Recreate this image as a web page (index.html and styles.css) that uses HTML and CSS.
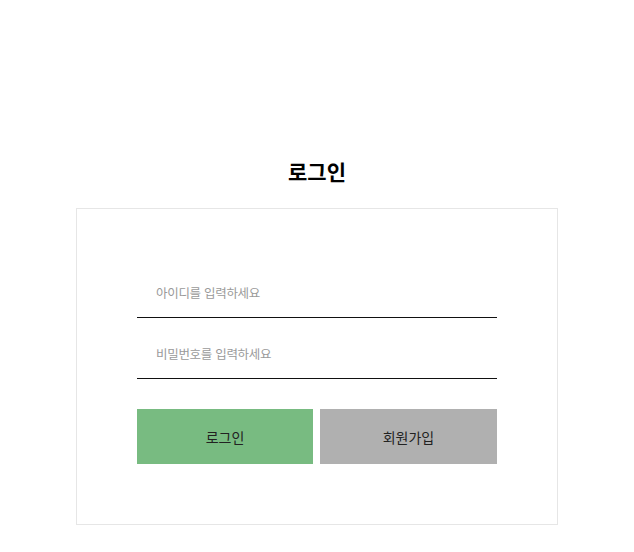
FILE: index.html
```html
<!DOCTYPE html>
<html lang="ko">
<head>
<meta charset="utf-8">
<title>로그인</title>
<link rel="stylesheet" href="styles.css">
</head>
<body>
<main class="page">
  <h2 class="title">로그인</h2>
  <form class="card">
    <div class="fields">
      <input class="field" type="text" placeholder="아이디를 입력하세요">
      <input class="field" type="password" placeholder="비밀번호를 입력하세요">
      <div class="actions">
        <button type="button" class="btn btn-login">로그인</button>
        <button type="button" class="btn btn-join">회원가입</button>
      </div>
    </div>
  </form>
</main>
</body>
</html>
```
FILE: styles.css
```css
* { box-sizing: border-box; }
html, body { margin: 0; padding: 0; background: #fff; }
body {
  font-family: "Noto Sans CJK KR", "Noto Sans", sans-serif;
  color: #222;
}
.page {
  padding-top: 156px;
  display: flex;
  flex-direction: column;
  align-items: center;
}
.title {
  margin: 0 0 24px;
  font-size: 21px;
  font-weight: 700;
  color: #000;
  line-height: 30px;
  height: 28px;
}
.card {
  width: 482px;
  border: 1px solid #e6e6e6;
  padding: 58px 0 60px;
}
.fields {
  width: 360px;
  margin: 0 auto;
  display: flex;
  flex-direction: column;
}
.field {
  height: 51px;
  border: none;
  border-bottom: 1px solid #111;
  padding: 0 19px;
  margin-bottom: 10px;
  font-family: inherit;
  font-size: 12.5px;
  letter-spacing: -0.3px;
  outline: none;
  background: transparent;
}
.field::placeholder { color: #9a9a9a; }
.field:last-of-type { margin-bottom: 0; }
.actions {
  margin-top: 30px;
  display: flex;
  gap: 7px;
}
.btn {
  height: 55px;
  border: none;
  font-family: inherit;
  font-size: 14px;
  color: #222;
  cursor: pointer;
}
.btn-login { width: 176px; background: #78bb81; }
.btn-join { flex: 1; background: #b0b0b0; }
```
